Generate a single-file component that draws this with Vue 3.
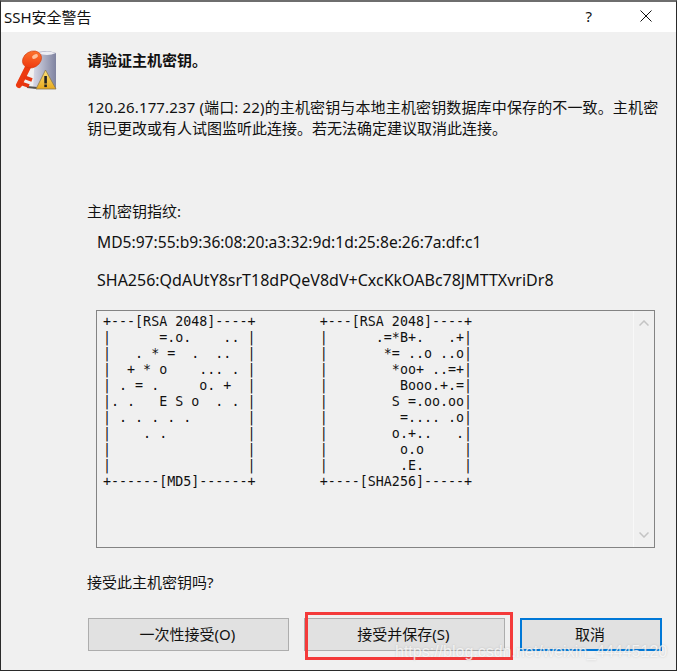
<template>
  <div class="win">
    <div class="titlebar">
      <span class="title">SSH安全警告</span>
      <span class="help">?</span>
      <svg class="close" width="12" height="12" viewBox="0 0 12 12">
        <path d="M0.5 0.5 L11.5 11.5 M11.5 0.5 L0.5 11.5" stroke="#111" stroke-width="1" fill="none" />
      </svg>
    </div>
    <div class="body">
      <div class="head">
        <svg class="icon" width="42" height="42" viewBox="0 0 42 42">
          <defs>
            <linearGradient id="cube" x1="0" y1="0" x2="1" y2="0">
              <stop offset="0" stop-color="#d8d9e6" />
              <stop offset="1" stop-color="#7f83a0" />
            </linearGradient>
            <linearGradient id="key" x1="1" y1="0" x2="0" y2="1">
              <stop offset="0" stop-color="#ff8034" />
              <stop offset="1" stop-color="#ec2c08" />
            </linearGradient>
            <linearGradient id="warn" x1="0" y1="0" x2="0" y2="1">
              <stop offset="0" stop-color="#fde27a" />
              <stop offset="1" stop-color="#e8a91c" />
            </linearGradient>
          </defs>
          <path d="M20 3 Q30 -1 41 3 L41 39 L18 39 Z" fill="url(#cube)" />
          <path d="M23 3 Q32 0 41 3 Q32 7 23 3 Z" fill="#eeeef4" />
          <path d="M12 37 L22 38" stroke="#55534e" stroke-width="2" fill="none" />
          <path d="M13.500 16 L4 35" stroke="#ec3a10" stroke-width="6" stroke-linecap="round" fill="none" />
          <path d="M9 27 L17 30 M5 33 L14 36" stroke="#e8350f" stroke-width="3.500" fill="none" />
          <ellipse cx="17" cy="9.500" rx="10" ry="8" transform="rotate(-30 17 9.500)" fill="url(#key)" stroke="#d03c10" stroke-width="0.600" />
          <ellipse cx="20" cy="6.500" rx="3.200" ry="1.900" transform="rotate(-30 20 6.500)" fill="#ffc09a" />
          <path d="M30.500 20 L41 39 L21 39 Z" fill="url(#warn)" stroke="#8a7a50" stroke-width="0.800" stroke-linejoin="round" />
          <rect x="29.300" y="26" width="2.600" height="7.500" fill="#222" />
          <rect x="29.300" y="34.500" width="2.600" height="2.600" fill="#222" />
        </svg>
        <div class="head-text">
          <div class="heading">请验证主机密钥。</div>
          <p class="desc">120.26.177.237 (端口: 22)的主机密钥与本地主机密钥数据库中保存的不一致。主机密钥已更改或有人试图监听此连接。若无法确定建议取消此连接。</p>
        </div>
      </div>

      <div class="fp-label">主机密钥指纹:</div>
      <div class="fp md5">MD5:97:55:b9:36:08:20:a3:32:9d:1d:25:8e:26:7a:df:c1</div>
      <div class="fp sha">SHA256:QdAUtY8srT18dPQeV8dV+CxcKkOABc78JMTTXvriDr8</div>

      <div class="art-box">
        <pre class="art">{{ art }}</pre>
        <div class="scroll">
          <svg width="10" height="6" viewBox="0 0 10 6"><path d="M0.500 5.500 L5 1 L9.500 5.500" stroke="#c4c4c4" stroke-width="1.500" fill="none" /></svg>
          <svg width="10" height="6" viewBox="0 0 10 6"><path d="M0.500 0.500 L5 5 L9.500 0.500" stroke="#c4c4c4" stroke-width="1.500" fill="none" /></svg>
        </div>
      </div>

      <div class="question">接受此主机密钥吗?</div>

      <div class="buttons">
        <button class="btn once">一次性接受(O)</button>
        <div class="marked">
          <button class="btn save">接受并保存(S)</button>
          <div class="red-frame"></div>
        </div>
        <button class="btn cancel">取消</button>
      </div>
    </div>
    <div class="watermark">https://blog.csdn.net/weixin_44445120</div>
  </div>
</template>

<script setup>
const art = [
  '+---[RSA 2048]----+        +---[RSA 2048]----+',
  '|      =.o.    .. |        |      .=*B+.   .+|',
  '|   . * =  .  ..  |        |       *= ..o ..o|',
  '|  + * o    ... . |        |        *oo+ ..=+|',
  '| . = .     o. +  |        |         Booo.+.=|',
  '|. .   E S o  . . |        |        S =.oo.oo|',
  '| . . . . .       |        |         =.... .o|',
  '|    . .          |        |        o.+..   .|',
  '|                 |        |         o.o     |',
  '|                 |        |         .E.     |',
  '+------[MD5]------+        +----[SHA256]-----+'
].join('\n')
</script>

<style>
html, body {
  margin: 0;
  background: #f0f0f0;
}
</style>

<style scoped>
.win {
  position: relative;
  width: 677px;
  height: 671px;
  box-sizing: border-box;
  border: 1px solid #2a2a2a;
  border-top: 2px solid #6e6e6e;
  background: #f0f0f0;
  font-family: "Noto Sans", "Noto Sans CJK SC", sans-serif;
  font-size: 15px;
  color: #111;
  overflow: hidden;
}

.titlebar {
  display: flex;
  align-items: center;
  height: 30px;
  background: #fff;
  padding: 0 24px 2px 3px;
  box-sizing: border-box;
}

.title {
  flex: 1;
  font-size: 15px;
}

.help {
  font-size: 15px;
  margin-right: 48px;
}

.body {
  padding: 18px 14px 0 86px;
}

.head {
  position: relative;
}

.icon {
  position: absolute;
  left: -72px;
  top: 0;
}

.heading {
  font-weight: 700;
  line-height: 21px;
}

.desc {
  margin: 26px 0 0;
  line-height: 21px;
}

.desc::first-line {
  letter-spacing: 0.14px;
}

.fp-label {
  margin-top: 62px;
  line-height: 21px;
}

.fp {
  margin-left: 10px;
  line-height: 21px;
}

.md5 {
  margin-top: 10px;
  font-size: 15.620px;
}

.sha {
  margin-top: 17px;
  font-size: 16px;
}

.art-box {
  display: flex;
  margin: 19px 0 0 9px;
  width: 559px;
  height: 238px;
  box-sizing: border-box;
  border: 1px solid #838383;
}

.art {
  flex: 1;
  margin: 0;
  padding: 3px 0 0 6px;
  font-family: "DejaVu Sans Mono", monospace;
  font-size: 13.330px;
  line-height: 16px;
  color: #111;
}

.scroll {
  width: 21px;
  border-left: 1px solid #f8f8f8;
  display: flex;
  flex-direction: column;
  justify-content: space-between;
  align-items: center;
  padding: 9px 0;
  box-sizing: border-box;
}

.question {
  margin-top: 24px;
  line-height: 21px;
}

.buttons {
  display: flex;
  gap: 15px;
  margin-top: 25px;
  margin-left: 1px;
}

.btn {
  display: block;
  height: 33px;
  padding: 0 2px 2px 0;
  background: #e1e1e1;
  border: 1px solid #adadad;
  box-sizing: border-box;
  font: inherit;
  color: #111;
}

.once {
  width: 202px;
}

.marked {
  position: relative;
}

.save {
  width: 201px;
}

.red-frame {
  position: absolute;
  left: 1px;
  top: -6px;
  width: 208px;
  height: 48px;
  box-sizing: border-box;
  border: 3px solid #f43a3a;
}

.cancel {
  width: 143px;
  border: 2px solid #0078d7;
}

.watermark {
  position: absolute;
  left: 394px;
  top: 641px;
  font-family: "Liberation Sans", sans-serif;
  font-size: 16px;
  color: rgba(255, 255, 255, 0.75);
  text-shadow: 0 0 2px rgba(120, 120, 120, 0.35);
  white-space: nowrap;
}
</style>
